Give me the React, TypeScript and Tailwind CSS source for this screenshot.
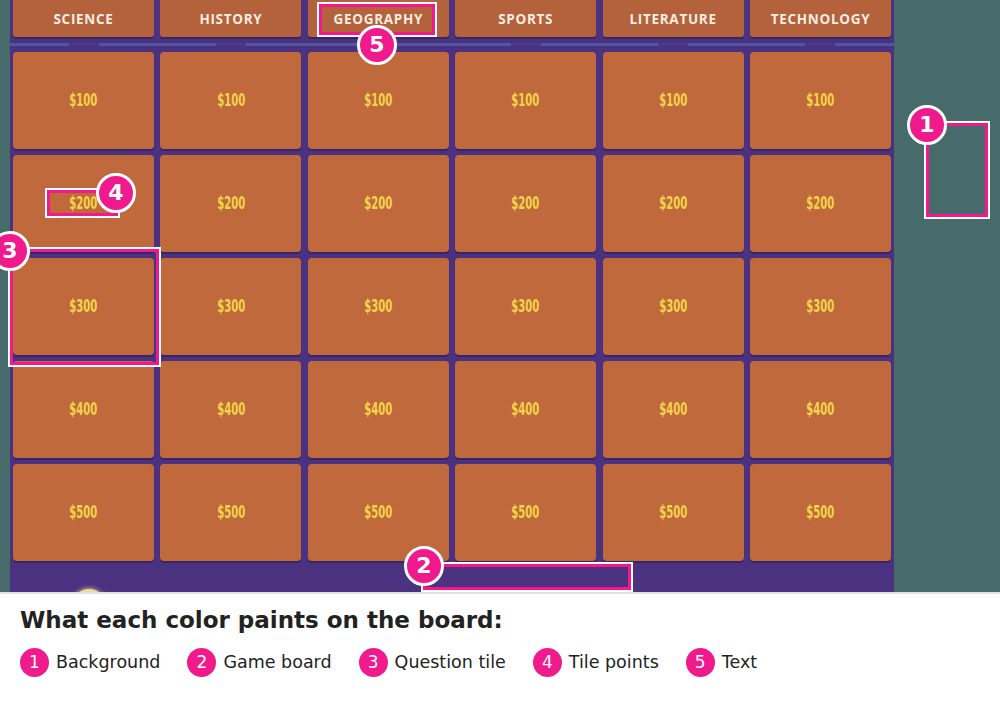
import React from "react";

const categories = ["SCIENCE", "HISTORY", "GEOGRAPHY", "SPORTS", "LITERATURE", "TECHNOLOGY"];
const values = [100, 200, 300, 400, 500];

const legend = [
  { n: 1, label: "Background" },
  { n: 2, label: "Game board" },
  { n: 3, label: "Question tile" },
  { n: 4, label: "Tile points" },
  { n: 5, label: "Text" },
];

// pink callout frames drawn over the board
const frames = [
  { n: 1, left: 926, top: 123, w: 62, h: 94, bx: 927, by: 125 },
  { n: 2, left: 423, top: 564, w: 208, h: 26, bx: 424, by: 566 },
  { n: 3, left: 10, top: 249, w: 149, h: 116, bx: 10, by: 251 },
  { n: 4, left: 47, top: 190, w: 71, h: 26, bx: 116, by: 193 },
  { n: 5, left: 319, top: 4, w: 116, h: 31, bx: 377, by: 45 },
];

function Badge({ n, x, y }: { n: number; x: number; y: number }) {
  return (
    <div
      className="absolute w-[40px] h-[40px] rounded-full bg-[#f01a8c] border-[3px] border-white flex items-center justify-center text-white font-bold text-[22px] leading-none"
      style={{ left: x - 20, top: y - 20, fontFamily: '"DejaVu Sans", sans-serif' }}
    >
      {n}
    </div>
  );
}

export default function App() {
  return (
    <div className="relative w-[1000px] h-[706px] bg-white overflow-hidden">
      {/* game screen */}
      <div className="h-[592px] bg-[#476b6b] flex">
        <div className="ml-[10px] w-[884px] h-full bg-[#4a3281] flex flex-col overflow-hidden px-[3px]">
          {/* category headers */}
          <div className="grid grid-cols-6 gap-x-[6.4px] h-[37px] shrink-0">
            {categories.map((c) => (
              <div
                key={c}
                className="bg-[#b3623b] rounded-b-[3px] shadow-[0_2px_0_#3a2466] flex items-center justify-center pt-[2px] text-[#f7ede2] font-bold text-[13.5px] tracking-[0.7px]"
                style={{ fontFamily: '"Open Sans", sans-serif' }}
              >
                {c}
              </div>
            ))}
          </div>
          {/* divider rail */}
          <div className="h-[15px] shrink-0 flex items-center -mx-[3px]">
            <div className="w-full h-[3px] bg-[#4f579d] grid grid-cols-6 px-[3px] gap-x-[6.4px]">
              {categories.map((c) => (
                <div key={c} className="flex justify-center">
                  <div className="w-[30px] h-full bg-[#473a8c]" />
                </div>
              ))}
            </div>
          </div>
          {/* question tiles */}
          <div className="grid grid-cols-6 gap-x-[6.4px] gap-y-[6px] shrink-0">
            {values.map((v) =>
              categories.map((c) => (
                <div
                  key={c + v}
                  className="h-[97px] bg-[#c0693c] rounded-[4px] shadow-[0_2px_0_#3a2466] flex items-center justify-center"
                >
                  <span
                    className="text-[#f4d44a] font-bold text-[17px] leading-none scale-x-[0.66] inline-block"
                    style={{ fontFamily: '"DejaVu Sans Condensed", "DejaVu Sans", sans-serif' }}
                  >
                    ${v}
                  </span>
                </div>
              ))
            )}
          </div>
          {/* player strip */}
          <div className="flex-1 shrink-0 pl-[59px] pt-[28px]">
            <div className="w-[34px] h-[34px] rounded-full bg-[#e9dc98] shadow-[0_0_5px_#e9dc98]" />
          </div>
        </div>
      </div>
      <div className="h-[2px] bg-[#e2e2e2]" />

      {/* legend */}
      <div className="px-[20px] pt-[15px]" style={{ fontFamily: '"DejaVu Sans", sans-serif' }}>
        <div className="text-[23px] font-bold text-[#222] leading-none">What each color paints on the board:</div>
        <div className="flex items-center gap-x-[27px] mt-[16px]">
          {legend.map((l) => (
            <div key={l.n} className="flex items-center gap-x-[7px]">
              <div className="w-[29px] h-[29px] rounded-full bg-[#f01a8c] text-white text-[17px] flex items-center justify-center leading-none">
                {l.n}
              </div>
              <span className="text-[17.5px] text-[#222] leading-none">{l.label}</span>
            </div>
          ))}
        </div>
      </div>

      {/* callouts */}
      {frames.map((f) => (
        <div
          key={"f" + f.n}
          className="absolute border-[3px] border-[#f3198c] shadow-[0_0_0_2px_white]"
          style={{ left: f.left, top: f.top, width: f.w, height: f.h }}
        />
      ))}
      {frames.map((f) => (
        <Badge key={"b" + f.n} n={f.n} x={f.bx} y={f.by} />
      ))}
    </div>
  );
}
